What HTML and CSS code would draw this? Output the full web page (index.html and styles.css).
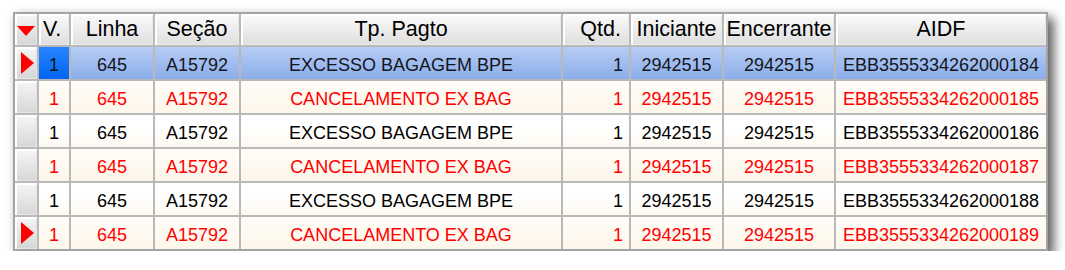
FILE: index.html
```html
<!DOCTYPE html>
<html lang="pt">
<head>
<meta charset="utf-8">
<title>Grid</title>
<link rel="stylesheet" href="styles.css">
</head>
<body>
<div class="grid">
  <div class="row head">
    <div class="hc ind"><svg class="down" width="18" height="10" viewBox="0 0 18 10"><polygon points="0,0 18,0 9,10" fill="#ff0000"/></svg></div>
    <div class="hc left">V.</div>
    <div class="hc">Linha</div>
    <div class="hc">Seção</div>
    <div class="hc">Tp. Pagto</div>
    <div class="hc right">Qtd.</div>
    <div class="hc">Iniciante</div>
    <div class="hc">Encerrante</div>
    <div class="hc">AIDF</div>
  </div>
  <div class="row sel">
    <div class="ind"><svg class="arrow" width="13" height="22" viewBox="0 0 13 22"><polygon points="0,0 13,11 0,22" fill="#ff0000"/></svg></div>
    <div class="c v">1</div>
    <div class="c">645</div>
    <div class="c">A15792</div>
    <div class="c">EXCESSO BAGAGEM BPE</div>
    <div class="c right">1</div>
    <div class="c">2942515</div>
    <div class="c">2942515</div>
    <div class="c">EBB3555334262000184</div>
  </div>
  <div class="row red">
    <div class="ind"></div>
    <div class="c v">1</div>
    <div class="c">645</div>
    <div class="c">A15792</div>
    <div class="c">CANCELAMENTO EX BAG</div>
    <div class="c right">1</div>
    <div class="c">2942515</div>
    <div class="c">2942515</div>
    <div class="c">EBB3555334262000185</div>
  </div>
  <div class="row">
    <div class="ind"></div>
    <div class="c v">1</div>
    <div class="c">645</div>
    <div class="c">A15792</div>
    <div class="c">EXCESSO BAGAGEM BPE</div>
    <div class="c right">1</div>
    <div class="c">2942515</div>
    <div class="c">2942515</div>
    <div class="c">EBB3555334262000186</div>
  </div>
  <div class="row red">
    <div class="ind"></div>
    <div class="c v">1</div>
    <div class="c">645</div>
    <div class="c">A15792</div>
    <div class="c">CANCELAMENTO EX BAG</div>
    <div class="c right">1</div>
    <div class="c">2942515</div>
    <div class="c">2942515</div>
    <div class="c">EBB3555334262000187</div>
  </div>
  <div class="row">
    <div class="ind"></div>
    <div class="c v">1</div>
    <div class="c">645</div>
    <div class="c">A15792</div>
    <div class="c">EXCESSO BAGAGEM BPE</div>
    <div class="c right">1</div>
    <div class="c">2942515</div>
    <div class="c">2942515</div>
    <div class="c">EBB3555334262000188</div>
  </div>
  <div class="row red">
    <div class="ind"><svg class="arrow" width="13" height="22" viewBox="0 0 13 22"><polygon points="0,0 13,11 0,22" fill="#ff0000"/></svg></div>
    <div class="c v">1</div>
    <div class="c">645</div>
    <div class="c">A15792</div>
    <div class="c">CANCELAMENTO EX BAG</div>
    <div class="c right">1</div>
    <div class="c">2942515</div>
    <div class="c">2942515</div>
    <div class="c">EBB3555334262000189</div>
  </div>
</div>
</body>
</html>
```
FILE: styles.css
```css
html, body {
  margin: 0;
  padding: 0;
  background: #ffffff;
}

body {
  padding: 12px 0 0 13px;
  font-family: "Liberation Sans", Arial, sans-serif;
}

.grid {
  display: grid;
  width: 1031px;
  grid-template-columns: 22px 30px 82px 84px 320px 66px 91px 110px 210px;
  grid-template-rows: 31px repeat(6, 32px);
  gap: 2px;
  background: #b9b9b9;
  border: 2px solid #a4a4a4;
  box-shadow: 0 0 10px rgba(0, 0, 0, 0.08), 6px 6px 10px rgba(0, 0, 0, 0.6);
}

.row {
  display: contents;
}

.hc {
  display: flex;
  align-items: center;
  justify-content: center;
  font-size: 21.5px;
  color: #000;
  background: linear-gradient(#fbfbfb, #dedede);
  box-shadow: inset 2px 2px 0 #ffffff, inset -1px -1px 0 #e9e9e9;
  white-space: nowrap;
  overflow: hidden;
}

.hc.left {
  justify-content: flex-start;
  padding-left: 4px;
}

.hc.right {
  justify-content: flex-end;
  padding-right: 8px;
}

.ind {
  display: flex;
  align-items: center;
  justify-content: center;
  background: linear-gradient(#f6f6f6, #d6d6d6);
  box-shadow: inset 2px 2px 0 #ffffff, inset -1px -1px 0 #e4e4e4;
}

.hc.ind {
  padding-top: 2px;
}

.arrow {
  margin-left: 2px;
}

.c {
  display: flex;
  align-items: center;
  justify-content: center;
  padding-top: 4px;
  font-size: 18px;
  color: #000;
  white-space: nowrap;
  background: linear-gradient(#ffffff 0%, #ffffff 40%, #fdf9f0 100%);
}

.c.right {
  justify-content: flex-end;
  padding-right: 6px;
}

.row.red .c {
  color: #ff0000;
  background: linear-gradient(#fffdf8, #fdf6ea);
}

.row.sel .c {
  color: #15151c;
  background: linear-gradient(#b6cdf4, #8badea);
}

.row.sel .c.v {
  background: linear-gradient(#2a86ff, #0065f2);
  color: #0a1a10;
}
```
